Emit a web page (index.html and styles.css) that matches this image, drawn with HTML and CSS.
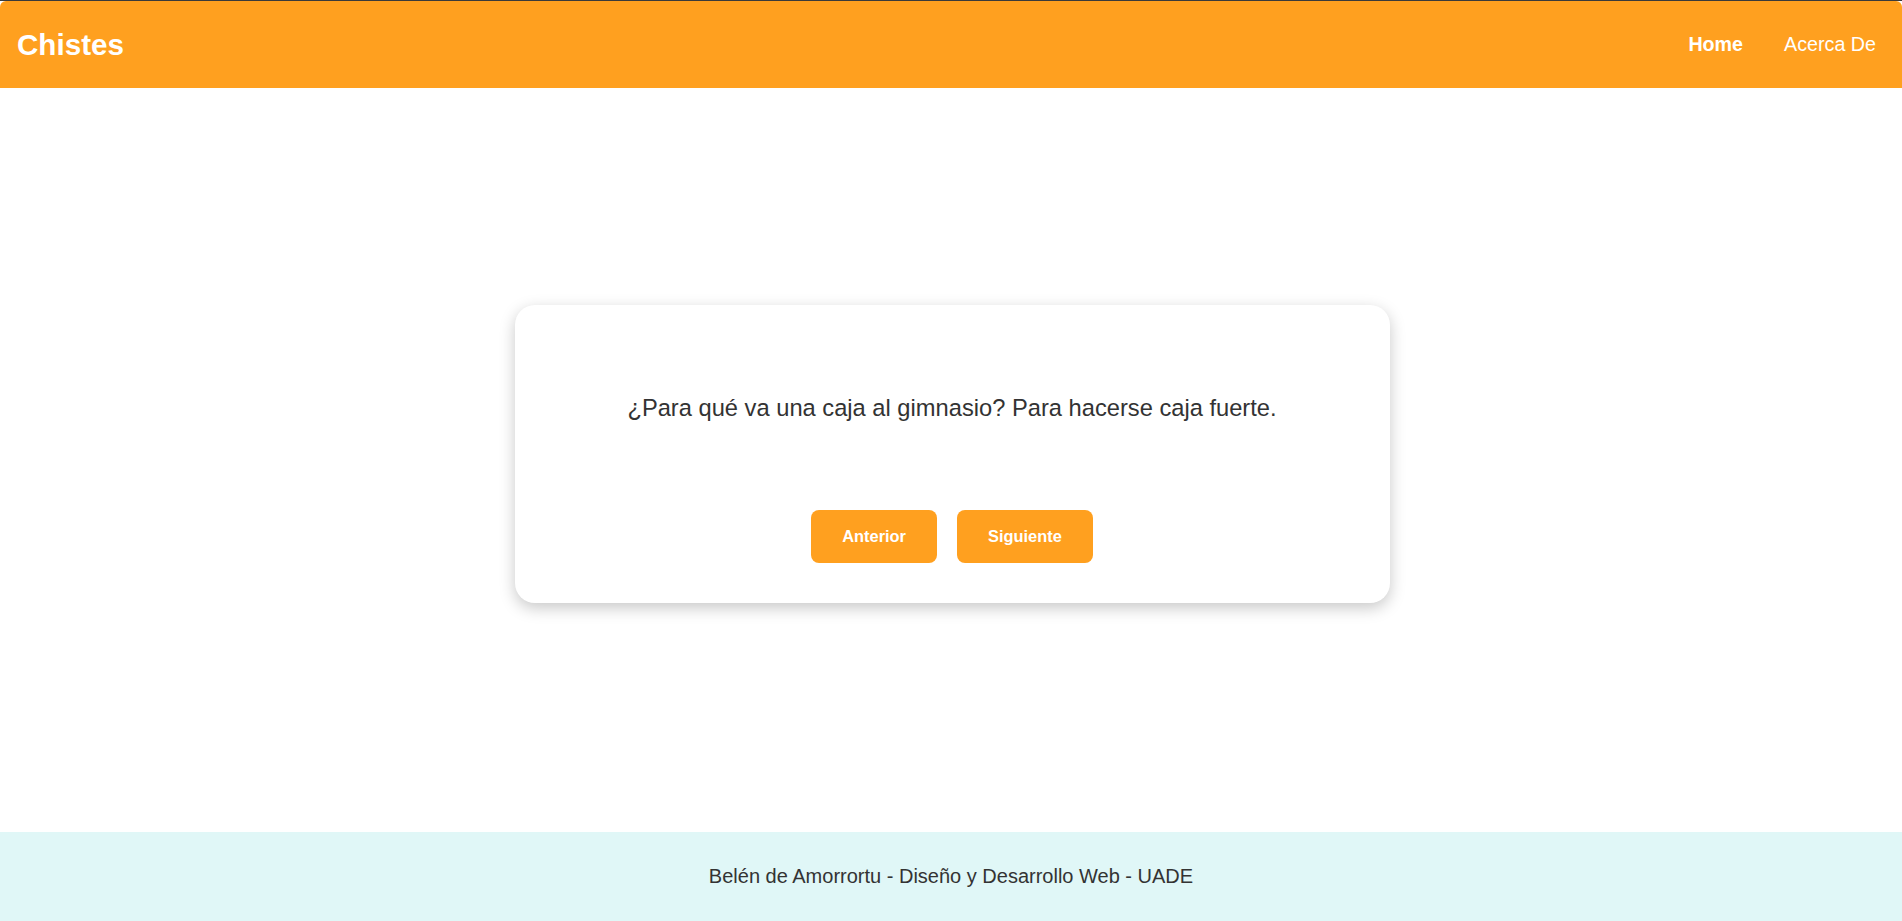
FILE: index.html
```html
<!DOCTYPE html>
<html lang="es">
<head>
<meta charset="utf-8">
<title>Chistes</title>
<link rel="stylesheet" href="styles.css">
</head>
<body>
<div class="page">
  <header class="header">
    <div class="brand">Chistes</div>
    <nav class="nav">
      <a class="nav-link active" href="#">Home</a>
      <a class="nav-link" href="#">Acerca De</a>
    </nav>
  </header>
  <main class="main">
    <section class="card">
      <p class="joke">¿Para qué va una caja al gimnasio? Para hacerse caja fuerte.</p>
      <div class="actions">
        <button class="btn">Anterior</button>
        <button class="btn">Siguiente</button>
      </div>
    </section>
  </main>
  <footer class="footer">
    <p>Belén de Amorrortu - Diseño y Desarrollo Web - UADE</p>
  </footer>
</div>
</body>
</html>
```
FILE: styles.css
```css
* { box-sizing: border-box; }
html, body { margin: 0; padding: 0; height: 100%; }
body {
  font-family: "Liberation Sans", Arial, sans-serif;
  background: #3a3a3a;
  color: #333;
}
.page {
  display: flex;
  flex-direction: column;
  min-height: 100vh;
  background: #fff;
  border-top: 1px solid #3a3a3a;
}
.header {
  background: #ffa01f;
  height: 87px;
  display: flex;
  align-items: center;
  justify-content: space-between;
  padding: 0 26px 0 17px;
  border-top-left-radius: 6px;
  border-top-right-radius: 6px;
}
.brand {
  color: #fff;
  font-weight: bold;
  font-size: 29.6px;
}
.nav { display: flex; gap: 41px; }
.nav-link {
  color: #fff;
  text-decoration: none;
  font-size: 19.7px;
}
.nav-link.active { font-weight: bold; }
.main {
  flex: 1;
  display: flex;
  align-items: center;
  justify-content: center;
  padding: 0 0 12px 2px;
}
.card {
  width: 875px;
  height: 298px;
  background: #fff;
  border-radius: 20px;
  box-shadow: 0 5px 16px rgba(0,0,0,0.22);
  display: flex;
  flex-direction: column;
  align-items: center;
  padding: 0 40px;
}
.joke {
  margin: 90px 0 0;
  font-size: 23.7px;
  line-height: 26px;
  color: #333;
}
.actions {
  display: flex;
  gap: 20px;
  margin-top: 89px;
}
.btn {
  font-family: "Liberation Sans", Arial, sans-serif;
  font-weight: bold;
  font-size: 16.4px;
  color: #fff;
  background: #ffa01f;
  border: none;
  border-radius: 8px;
  height: 53px;
  padding: 0 31px;
  cursor: pointer;
}
.footer {
  background: #e0f7f7;
  height: 89px;
  display: flex;
  align-items: center;
  justify-content: center;
}
.footer p {
  margin: 0;
  font-size: 20px;
  color: #333;
}
```
